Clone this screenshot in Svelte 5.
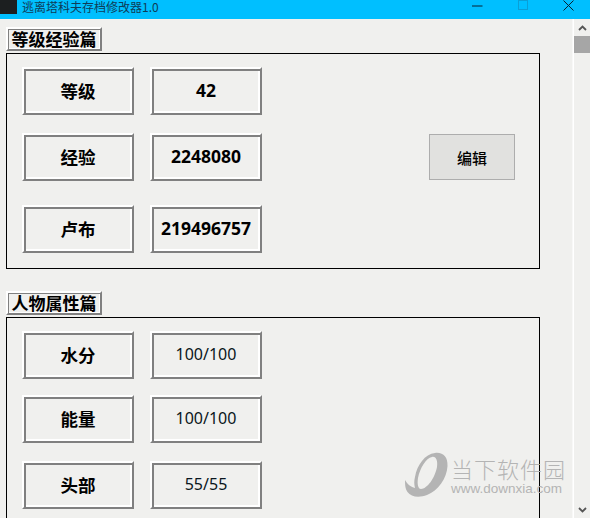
<script lang="ts">
  const levelRows = [
    { label: '等级', value: '42', gap: 'gap-none' },
    { label: '经验', value: '2248080', gap: 'gap-18', edit: true },
    { label: '卢布', value: '219496757', gap: 'gap-24' }
  ];
  const statRows = [
    { label: '水分', value: '100/100', gap: 'gap-none' },
    { label: '能量', value: '100/100', gap: 'gap-16' },
    { label: '头部', value: '55/55', gap: 'gap-18' }
  ];
</script>

<div class="window">
  <header class="titlebar">
    <div class="app-icon"></div>
    <span class="title">逃离塔科夫存档修改器1.0</span>
    <div class="controls">
      <svg width="11" height="11" viewBox="0 0 11 11"><path d="M0 6h10.5" stroke="#0a2030" fill="none" /></svg>
      <svg width="10" height="10" viewBox="0 0 10 10"><rect x=".5" y=".5" width="9" height="9" stroke="#0a9fd6" fill="none" /></svg>
      <svg width="11" height="11" viewBox="0 0 11 11"><path d="M.5.5l10 10M10.5.5l-10 10" stroke="#0a2030" fill="none" /></svg>
    </div>
  </header>

  <div class="body">
    <main class="content">
      <section>
        <div class="legend">等级经验篇</div>
        <div class="panel">
          {#each levelRows as row}
            <div class="row {row.gap}">
              <div class="cell">{row.label}</div>
              <div class="cell">{row.value}</div>
              {#if row.edit}
                <button class="edit">编辑</button>
              {/if}
            </div>
          {/each}
        </div>
      </section>

      <section class="second">
        <div class="legend">人物属性篇</div>
        <div class="panel">
          {#each statRows as row}
            <div class="row {row.gap}">
              <div class="cell">{row.label}</div>
              <div class="cell plain">{row.value}</div>
            </div>
          {/each}
        </div>
      </section>
    </main>

    <aside class="scrollbar">
      <svg class="arrow" width="9" height="6" viewBox="0 0 9 6"><path d="M1 5l3.500-3.500L8 5" stroke="#555" stroke-width="1.800" fill="none" /></svg>
      <div class="thumb"></div>
      <svg class="arrow down" width="9" height="6" viewBox="0 0 9 6"><path d="M1 1l3.500 3.500L8 1" stroke="#555" stroke-width="1.800" fill="none" /></svg>
    </aside>
  </div>

  <div class="watermark">
    <svg width="44" height="46" viewBox="0 0 44 46">
      <path fill-rule="evenodd" fill="#b4b4b4" d="M30 1C38 0 43 5 42.500 14C42 26 33 39 22 43C14 46 6 45 2.500 40C.5 37 0 34 0 28C3 33 6 35 10 36C9 32 9 29 10 25C12 13 20 2 30 1ZM27 5C21 6 15 16 13 26C12 32 13 37 16 37C22 37 30 26 32 15C33 9 31 4 27 5Z" />
    </svg>
    <div class="brand">
      <span class="brand-name">当下软件园</span>
      <span class="brand-url">www.downxia.com</span>
    </div>
  </div>
</div>

<style>
  :global(body) {
    margin: 0;
    overflow: hidden;
  }

  .window {
    position: relative;
    width: 590px;
    height: 518px;
    overflow: hidden;
    background: #f0f0ee;
    color: #000;
    font-family: "Noto Sans", "Noto Sans CJK SC", sans-serif;
  }

  .titlebar {
    display: flex;
    align-items: flex-start;
    height: 19px;
    background: #00bfff;
  }

  .app-icon {
    width: 17px;
    height: 14px;
    background: #1c1f20;
  }

  .title {
    margin-left: 5px;
    font-family: "Noto Sans CJK SC", sans-serif;
    font-size: 12px;
    line-height: 13px;
    color: #0f3c58;
  }

  .controls {
    display: flex;
    gap: 35px;
    margin-left: auto;
    margin-right: 16px;
  }

  .controls svg {
    display: block;
  }

  .body {
    display: flex;
    height: 499px;
  }

  .content {
    width: 572px;
    flex: none;
    padding: 8px 0 0 6px;
    box-sizing: border-box;
  }

  .second {
    margin-top: 22px;
  }

  .legend {
    display: flex;
    align-items: center;
    justify-content: center;
    width: 96px;
    height: 24px;
    box-sizing: border-box;
    margin-bottom: 2px;
    padding-bottom: 1px;
    border: 2px solid;
    border-color: #fff #808080 #808080 #fff;
    box-shadow: inset 1px 1px 0 #808080, inset -1px -1px 0 #fff;
    font-family: "Noto Sans CJK SC", sans-serif;
    font-size: 17px;
    font-weight: 700;
    line-height: 1;
  }

  .panel {
    width: 534px;
    box-sizing: border-box;
    padding: 13px 0 15px 15px;
    border: 1px solid #000;
  }

  .row {
    display: flex;
    gap: 16px;
    align-items: center;
  }

  .gap-16 { margin-top: 16px; }
  .gap-18 { margin-top: 18px; }
  .gap-24 { margin-top: 24px; }

  .cell {
    display: flex;
    align-items: center;
    justify-content: center;
    width: 112px;
    height: 48px;
    box-sizing: border-box;
    padding-bottom: 2px;
    border: 2px solid;
    border-color: #fff #808080 #808080 #fff;
    box-shadow: inset 2px 2px 0 #808080, inset -2px -2px 0 #fff;
    font-size: 17.500px;
    font-weight: 700;
  }

  .plain {
    font-size: 16px;
    font-weight: 400;
    color: #0a1620;
  }

  .edit {
    width: 86px;
    height: 46px;
    margin-left: 151px;
    padding: 0;
    background: #e1e1df;
    border: 1px solid #adadad;
    color: #000;
    font-family: "Noto Sans CJK SC", sans-serif;
    font-size: 15px;
    font-weight: 500;
  }

  .scrollbar {
    position: relative;
    flex: none;
    width: 16px;
    margin-left: 2px;
    box-shadow: -1.500px 0 0 #fff;
    display: flex;
    flex-direction: column;
    align-items: center;
  }

  .arrow {
    margin-top: 6px;
  }

  .thumb {
    width: 100%;
    height: 17px;
    margin-top: 5px;
    background: #a6a6a6;
  }

  .arrow.down {
    margin-top: auto;
    margin-bottom: 5px;
  }

  .watermark {
    position: absolute;
    left: 405px;
    top: 452px;
    display: flex;
    gap: 2px;
    pointer-events: none;
    color: #b4b4b4;
  }

  .brand {
    display: flex;
    flex-direction: column;
    padding-top: 3px;
  }

  .brand-name {
    font-family: "Noto Sans CJK SC", sans-serif;
    font-size: 22px;
    font-weight: 300;
    letter-spacing: 1px;
    line-height: 26px;
  }

  .brand-url {
    font-family: "Liberation Sans", sans-serif;
    font-size: 13.500px;
    line-height: 15px;
  }
</style>
